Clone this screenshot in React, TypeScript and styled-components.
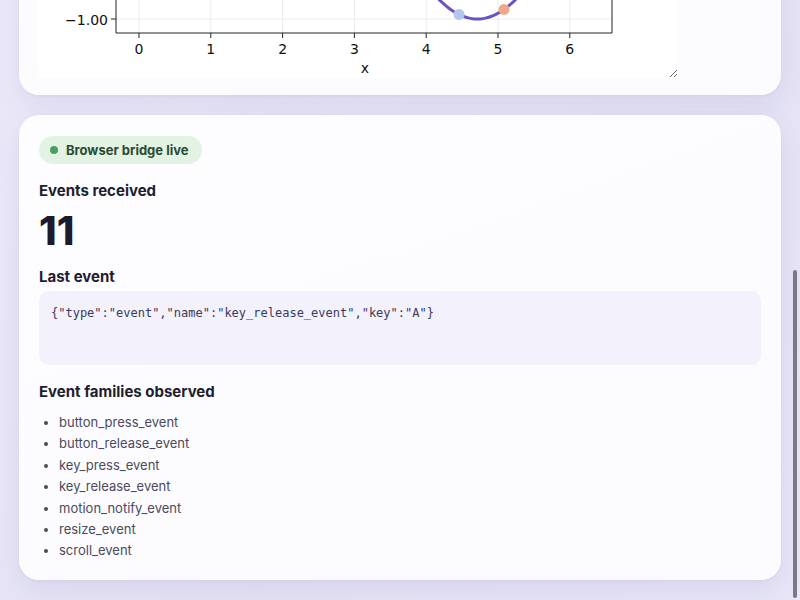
import React from 'react';
import styled, { createGlobalStyle } from 'styled-components';

const GlobalStyle = createGlobalStyle`
    html, body {
        margin: 0;
        padding: 0;
        height: 100%;
        overflow: hidden;
    }
    body {
        background: linear-gradient(135deg, #ebe9f8 0%, #e5e3f4 60%, #e8e6f7 100%);
        font-family: Inter, "Noto Sans", sans-serif;
        color: #1f1d2e;
    }
`

const families = [
    'button_press_event',
    'button_release_event',
    'key_press_event',
    'key_release_event',
    'motion_notify_event',
    'resize_event',
    'scroll_event',
];

const lastEvent = '{"type":"event","name":"key_release_event","key":"A"}';

// plot maps data to page pixels; the figure svg uses page coordinates
const X0 = 139;
const XS = 71.8;
const Y0 = -121;
const YS = 140;
const px = (x: number) => X0 + x * XS;
const py = (y: number) => Y0 - y * YS;

const sinePath = () => {
    const pts: string[] = [];
    for (let i = 0; i <= 200; i++) {
        const x = (i / 200) * Math.PI * 2;
        pts.push(`${i === 0 ? 'M' : 'L'}${px(x).toFixed(2)},${py(Math.sin(x)).toFixed(2)}`);
    }
    return pts.join(' ');
};

const Plot: React.FC = () => {
    const ticks = [0, 1, 2, 3, 4, 5, 6];
    const dots = [
        { x: 4.457, color: '#b4c6ee' },
        { x: 5.084, color: '#f0a987' },
    ];
    return (
        <PlotSvg viewBox="39 -302 639 380" width={ 639 } height={ 380 }>
            <defs>
                <clipPath id="axes">
                    <rect x={ 116 } y={ -275 } width={ 496 } height={ 308 } />
                </clipPath>
            </defs>
            <rect x={ 116 } y={ -275 } width={ 496 } height={ 308 } fill="#fff" />
            { ticks.map(t => (
                <line key={ t } x1={ px(t) } x2={ px(t) } y1={ -275 } y2={ 33 } stroke="#e6e6e6" strokeWidth={ 0.8 } />
            )) }
            <line x1={ 116 } x2={ 612 } y1={ 19 } y2={ 19 } stroke="#e6e6e6" strokeWidth={ 0.8 } />
            <g clipPath="url(#axes)">
                <path d={ sinePath() } fill="none" stroke="#6a52c6" strokeWidth={ 3 } strokeLinecap="round" />
                { dots.map(d => (
                    <circle key={ d.x } cx={ px(d.x) } cy={ py(Math.sin(d.x)) } r={ 5.5 } fill={ d.color } />
                )) }
            </g>
            <path d="M116,-275 L116,33 L612,33 L612,-275" fill="none" stroke="#222" strokeWidth={ 1 } />
            { ticks.map(t => (
                <g key={ t }>
                    <line x1={ px(t) } x2={ px(t) } y1={ 33 } y2={ 38 } stroke="#222" strokeWidth={ 1 } />
                    <TickText x={ px(t) } y={ 54 } textAnchor="middle">{ t }</TickText>
                </g>
            )) }
            <line x1={ 111 } x2={ 116 } y1={ 19 } y2={ 19 } stroke="#222" strokeWidth={ 1 } />
            <TickText x={ 108 } y={ 24.5 } textAnchor="end">−1.00</TickText>
            <TickText x={ 365 } y={ 73 } textAnchor="middle">x</TickText>
        </PlotSvg>
    );
};

export default function App() {
    return (
        <React.Fragment>
            <GlobalStyle />
            <Page>
                <FigureCard>
                    <Figure>
                        <Plot />
                    </Figure>
                </FigureCard>
                <Card>
                    <Badge><Dot />Browser bridge live</Badge>
                    <Heading>Events received</Heading>
                    <Count>11</Count>
                    <Heading $gap={ 14 }>Last event</Heading>
                    <CodeBox>{ lastEvent }</CodeBox>
                    <Heading>Event families observed</Heading>
                    <FamilyList>
                        { families.map(f => <li key={ f }>{ f }</li>) }
                    </FamilyList>
                </Card>
            </Page>
            <ScrollThumb />
        </React.Fragment>
    );
}

const Page = styled.div`
    display: flex;
    flex-direction: column;
    gap: 20px;
    padding: 0 19px;
`

const Card = styled.section`
    display: flex;
    flex-direction: column;
    padding: 21px 20px 18px;
    border-radius: 20px;
    background: linear-gradient(160deg, #fdfdff 0%, #fbfbfe 100%);
    box-shadow: 0 10px 28px rgba(90, 80, 170, 0.10), 0 1px 3px rgba(90, 80, 170, 0.06);
`

const FigureCard = styled(Card)`
    margin-top: -322px;
    padding: 20px 20px 17px;
`

const Figure = styled.div`
    width: 639px;
    height: 380px;
    background: #fff;
    overflow: hidden;
    resize: both;
`

const PlotSvg = styled.svg`
    display: block;
`

const TickText = styled.text`
    font-family: "DejaVu Sans", sans-serif;
    font-size: 14px;
    fill: #111;
`

const Badge = styled.div`
    align-self: flex-start;
    display: flex;
    align-items: center;
    gap: 8px;
    height: 28px;
    padding: 0 13px 0 11px;
    border-radius: 14px;
    background: #e3f3e3;
    color: #2c4a33;
    font-size: 13px;
    font-weight: 700;
`

const Dot = styled.span`
    width: 8px;
    height: 8px;
    border-radius: 50%;
    background: #4a9f5c;
`

const Heading = styled.h3<{ $gap?: number }>`
    margin: ${ props => props.$gap ?? 17 }px 0 0;
    font-size: 15px;
    line-height: 20px;
    font-weight: 700;
    color: #1f1d2e;
`

const Count = styled.div`
    margin: 8px 0 0;
    font-size: 40px;
    line-height: 44px;
    font-weight: 800;
    color: #1c1a2b;
`

const CodeBox = styled.pre`
    margin: 4px 0 0;
    min-height: 46px;
    padding: 14px 12px;
    border-radius: 10px;
    background: #f3f1fc;
    font-family: "DejaVu Sans Mono", monospace;
    font-size: 12px;
    line-height: 16px;
    color: #3a3a5a;
    white-space: pre-wrap;
`

const FamilyList = styled.ul`
    margin: 10px 0 0;
    padding-left: 20px;
    font-size: 13px;
    line-height: 21.4px;
    color: #4b4a5c;
`

const ScrollThumb = styled.div`
    position: fixed;
    right: 3px;
    top: 270px;
    width: 4px;
    height: 328px;
    border-radius: 2px;
    background: #7b7986;
`
